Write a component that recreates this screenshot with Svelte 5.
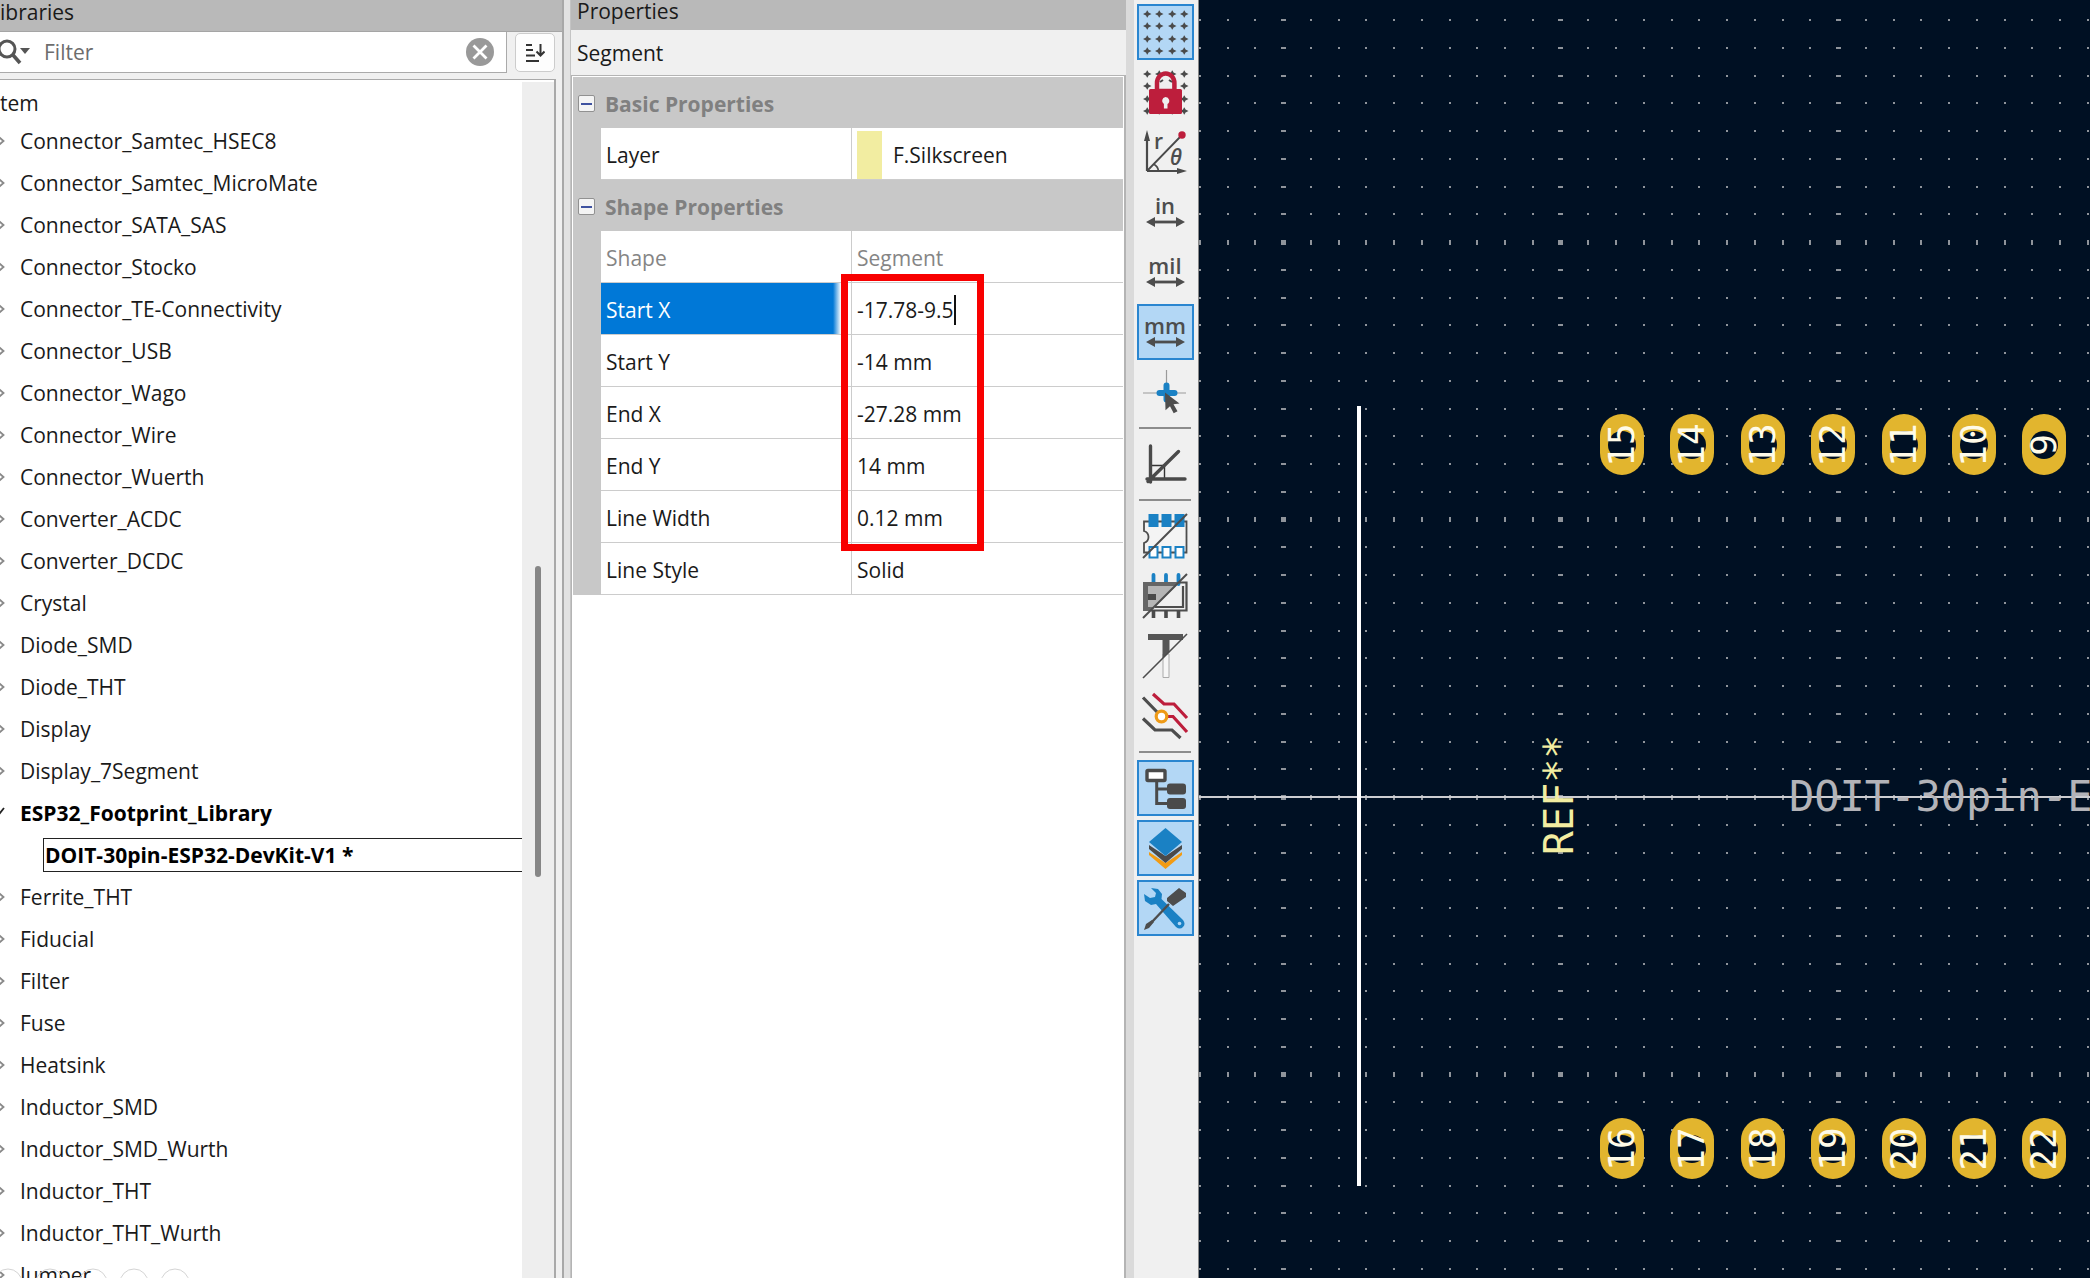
<script lang="ts">
  type Row = { label: string; value: string; kind?: 'swatch' | 'disabled' | 'editing' };

  const before = [
    'Connector_Samtec_HSEC8', 'Connector_Samtec_MicroMate', 'Connector_SATA_SAS', 'Connector_Stocko',
    'Connector_TE-Connectivity', 'Connector_USB', 'Connector_Wago', 'Connector_Wire', 'Connector_Wuerth',
    'Converter_ACDC', 'Converter_DCDC', 'Crystal', 'Diode_SMD', 'Diode_THT', 'Display', 'Display_7Segment',
  ];
  const after = [
    'Ferrite_THT', 'Fiducial', 'Filter', 'Fuse', 'Heatsink', 'Inductor_SMD', 'Inductor_SMD_Wurth',
    'Inductor_THT', 'Inductor_THT_Wurth', 'Jumper',
  ];

  const groups: { title: string; rows: Row[] }[] = [
    { title: 'Basic Properties', rows: [{ label: 'Layer', value: 'F.Silkscreen', kind: 'swatch' }] },
    {
      title: 'Shape Properties',
      rows: [
        { label: 'Shape', value: 'Segment', kind: 'disabled' },
        { label: 'Start X', value: '-17.78-9.5', kind: 'editing' },
        { label: 'Start Y', value: '-14 mm' },
        { label: 'End X', value: '-27.28 mm' },
        { label: 'End Y', value: '14 mm' },
        { label: 'Line Width', value: '0.12 mm' },
        { label: 'Line Style', value: 'Solid' },
      ],
    },
  ];

  // Tool ids by toolbar section; a separator is drawn between sections.
  const sections = [
    ['grid', 'lock', 'polar', 'in', 'mil', 'mm', 'cursor'],
    ['angle'],
    ['pads', 'graphics', 'text', 'tracks'],
    ['tree', 'layers', 'tools'],
  ];
  const names: Record<string, string> = {
    grid: 'Show grid', lock: 'Grid overrides', polar: 'Polar coordinates', in: 'Inches', mil: 'Mils',
    mm: 'Millimeters', cursor: 'Full-window crosshairs', angle: 'Constrain to 45 degrees',
    pads: 'Sketch pads', graphics: 'Sketch graphic items', text: 'Sketch text items',
    tracks: 'Inactive layer view mode', tree: 'Library tree', layers: 'Appearance manager', tools: 'Properties manager',
  };
  const active = ['grid', 'mm', 'tree', 'layers', 'tools'];
  const dots = [4, 16, 29, 41];

  // Board grid: every tenth line in each direction is drawn bolder.
  const pitch = 27.75;
  let small = '';
  for (let r = -29; r < 40; r++) {
    for (let c = -3; c < 80; c++) {
      const w = c % 10 === 0 ? 5 : 2;
      const h = r % 10 === 0 ? 5 : 2;
      const x = Math.round(84 + c * pitch - w / 2);
      const y = Math.round(797 + r * pitch - h / 2);
      small += `M${x} ${y}h${w}v${h}h-${w}z`;
    }
  }

  const padX = (i: number) => Math.round(423 + i * 70.4);
  const pads = [
    ...['15', '14', '13', '12', '11', '10', '9'].map((n, i) => ({ n, x: padX(i), y: 445 })),
    ...['16', '17', '18', '19', '20', '21', '22'].map((n, i) => ({ n, x: padX(i), y: 1149 })),
  ];
</script>

{#snippet chevron()}
  <svg class="chev" width="10" height="14" viewBox="0 0 10 14" aria-hidden="true">
    <path d="M2 1.5 8.5 7 2 12.5" fill="none" stroke="#8a8a8a" stroke-width="1.8" />
  </svg>
{/snippet}

{#snippet dimension(word: string)}
  <text x="22" y="24" text-anchor="middle" class="unit">{word}</text>
  <path d="M9 32h27" stroke="#4d4d4d" stroke-width="2.8" />
  <path d="M3 32l9-5v10zM42 32l-9-5v10z" fill="#4d4d4d" />
{/snippet}

{#snippet glyph(id: string)}
  <svg width="44" height="44" viewBox="0 0 44 44" overflow="visible" aria-hidden="true">
    {#if id === 'grid' || id === 'lock'}
      {#each dots as y}{#each dots as x}
        <path d="M{x - 4} {y}l3-1.5 1-2h0.5l1 2 3 1.5-3 1.5-1 2h-0.5l-1-2z" fill="#4a4a4a" />
      {/each}{/each}
    {/if}
    {#if id === 'lock'}
      <path d="M14 21V13a8.7 9.5 0 0 1 17.4 0v8z" fill="#efefef" stroke="#bd1e3c" stroke-width="4.5" />
      <path d="M17 12l3-2M26 10l3 2" stroke="#4a4a4a" stroke-width="2" />
      <rect x="6" y="19" width="33" height="25" rx="1.5" fill="#bd1e3c" />
      <path d="M22.5 27a3.8 3.8 0 0 1 2 7v4.5h-3.6v-4.5a3.8 3.8 0 0 1 1.6-7z" fill="#efefef" />
    {:else if id === 'polar'}
      <path d="M4 41V8M4 41h33" stroke="#4a4a4a" stroke-width="2.2" fill="none" />
      <path d="M4 0l3 11H1zM44 41l-10-3v6z" fill="#4a4a4a" />
      <path d="M4 41L38 6M10 34q5 2 5.5 7" stroke="#4a4a4a" stroke-width="1.8" fill="none" />
      <circle cx="39" cy="5" r="3.7" fill="#bd1e3c" />
      <text x="11" y="19" class="sym">r</text>
      <text x="27" y="35" class="sym it">θ</text>
    {:else if id === 'in' || id === 'mil' || id === 'mm'}
      {@render dimension(id)}
    {:else if id === 'cursor'}
      <path d="M23.5 0v23M0 23h43" stroke="#9a9a9a" stroke-width="1.2" />
      <path d="M23.5 15.5v14M16.5 23h15" stroke="#1a81c4" stroke-width="6" stroke-linecap="round" />
      <path d="M22 22.5l14.5 11-6 .8 4 7-3.8 2-3.7-7-4.5 4z" fill="#4d4d4d" />
    {:else if id === 'angle'}
      <path d="M7.5 23.5h14V37" fill="none" stroke="#333" stroke-width="1.4" />
      <path d="M7.5 4v36M4 37h38M5 39.5L35.5 9.5" fill="none" stroke="#4a4a4a" stroke-width="3.4" stroke-linecap="round" />
    {:else if id === 'pads'}
      <path d="M1 7.5h42.5v31H1V29q4.500-1.500 4.500-6T1 17z" fill="#f4f4f4" stroke="#4d4d4d" stroke-width="1.8" />
      <path d="M5.5 0h10v13h-10zM18.5 0h10v13h-10zM31.5 0h10v13h-10z" fill="#1a81c4" />
      <path d="M6.5 33h8v10.5h-8zM19.5 33h8v10.5h-8zM32.5 33h8v10.5h-8z" fill="#fff" stroke="#1a81c4" stroke-width="2" />
      <path d="M0 44L44 0" stroke="#4d4d4d" stroke-width="2" />
    {:else if id === 'graphics'}
      <path d="M10.5 10V1M23 10V1M35.5 10V1" stroke="#1a81c4" stroke-width="3.8" stroke-linecap="round" />
      <path d="M0 8h37L7 37H0z" fill="#666" />
      <path d="M5 12h28L12 33H5z" fill="#b5b5b5" />
      <path d="M5 20h8v6H5z" fill="#4a4a4a" />
      <path d="M36 8.5h7.5v28H8M40 12v21H12" fill="none" stroke="#4d4d4d" stroke-width="2.2" />
      <path d="M10.5 36v8M23 36v8M35.5 36v8" stroke="#4a4a4a" stroke-width="3.6" />
      <path d="M0 44L44 0" stroke="#4d4d4d" stroke-width="2" />
    {:else if id === 'text'}
      <path d="M20 20h6v23.5h-6z" fill="#f6f6f6" stroke="#aaa" stroke-width="1" />
      <path d="M5 0h35v6H26.5v12l-7 6V6H5z" fill="#565656" />
      <path d="M0 44L44 0" stroke="#4d4d4d" stroke-width="1.6" />
    {:else if id === 'tracks'}
      <path d="M0 3.5L16 20M0 24.5L12 36h17l8.5 8" fill="none" stroke="#4d4d4d" stroke-width="3.2" />
      <path d="M10 0l11 10h10l13 14M23 22.5h7L44 38" fill="none" stroke="#bd1e3c" stroke-width="3.2" />
      <circle cx="18.5" cy="22.5" r="5.3" fill="#fff" stroke="#ee9a16" stroke-width="3.2" />
    {:else if id === 'tree'}
      <path d="M13.7 15v22.5H27M13.7 23H27" fill="none" stroke="#4a4a4a" stroke-width="3" />
      <rect x="4" y="4.5" width="18" height="10" rx="1" fill="#fff" stroke="#4a4a4a" stroke-width="3.4" />
      <rect x="24" y="17.5" width="19" height="11" rx="3" fill="#4a4a4a" />
      <rect x="24" y="32" width="19" height="11" rx="3" fill="#4a4a4a" />
    {:else if id === 'layers'}
      <path d="M6 26l16.5 11L39 26v3L22.5 43 6 29z" fill="#f29b13" />
      <path d="M6 19l16.5 11L39 19v4L22.5 37 6 23z" fill="#4a4a4a" />
      <path d="M22.5 2L39 16 22.5 30 6 16z" fill="#1a81c4" />
    {:else if id === 'tools'}
      <path d="M8 2l7 1 4 5-.5 5L40 34q3 4 0 7t-7 0L13 18l-5 1-6-4-1-7 6 4 5-1 1-4z" fill="#1a81c4" />
      <circle cx="36.5" cy="37.5" r="1.8" fill="#b0d6f5" />
      <path d="M26 18L8 37" stroke="#4d4d4d" stroke-width="2.4" />
      <path d="M9 34l2 2-5 6-5 2 2-6zM36 2l7 5v4L30 20l-6-5v-3z" fill="#4d4d4d" />
    {/if}
  </svg>
{/snippet}

<div class="app">
  <aside class="libraries">
    <h2 class="caption">ibraries</h2>
    <div class="search">
      <label class="filter">
        <svg width="32" height="30" viewBox="0 0 32 30" aria-hidden="true">
          <circle cx="7" cy="12" r="8" fill="none" stroke="#555" stroke-width="3" />
          <path d="M13 18l7 8" stroke="#555" stroke-width="3.6" />
          <path d="M20 11h10l-5 6z" fill="#555" />
        </svg>
        <input type="text" placeholder="Filter" aria-label="Filter" />
        <button class="clear" aria-label="Clear filter">
          <svg width="28" height="28" viewBox="0 0 28 28" aria-hidden="true">
            <circle cx="14" cy="14" r="14" fill="#999" />
            <path d="M7.5 7.5l13 13M20.5 7.5l-13 13" stroke="#fff" stroke-width="2.8" />
          </svg>
        </button>
      </label>
      <button class="sort" aria-label="Sort">
        <svg width="20" height="20" viewBox="0 0 20 20" aria-hidden="true">
          <path d="M1 2h6M1 7h7M1 12.5h9M1 18h13" stroke="#333" stroke-width="2" />
          <path d="M15.5 1v11M11.5 8.5l4 4 4-4" fill="none" stroke="#333" stroke-width="2" />
        </svg>
      </button>
    </div>
    <div class="treebox">
      <div class="tree">
        <div class="head">tem</div>
        <ul>
          {#each before as name}<li>{@render chevron()}{name}</li>{/each}
          <li class="bold">
            <svg class="chev" width="10" height="14" viewBox="0 0 10 14" aria-hidden="true">
              <path d="M-3 8l4 4 8-10" fill="none" stroke="#222" stroke-width="1.8" />
            </svg>ESP32_Footprint_Library
          </li>
          <li class="bold child"><span>DOIT-30pin-ESP32-DevKit-V1 *</span></li>
          {#each after as name}<li>{@render chevron()}{name}</li>{/each}
        </ul>
      </div>
      <div class="track"><div class="thumb"></div></div>
    </div>
    <svg class="ghost" width="200" height="10" aria-hidden="true">
      {#each [8, 50, 93, 134, 175] as x}<circle cx={x} cy="15" r="14" />{/each}
    </svg>
  </aside>
  <div class="split"></div>

  <section class="properties">
    <h2 class="caption">Properties</h2>
    <div class="subject">Segment</div>
    <div class="gridbox">
      <div class="wrap">
        <table>
          <colgroup><col class="c1" /><col class="c2" /><col /></colgroup>
          <tbody>
            {#each groups as g}
              <tr class="group">
                <th class="gutter"><button class="fold" aria-label="Collapse {g.title}"></button></th>
                <th colspan="2">{g.title}</th>
              </tr>
              {#each g.rows as r}
                <tr class={r.kind}>
                  <td class="gutter"></td>
                  <td class="name">{r.label}</td>
                  <td class="value">
                    {#if r.kind === 'editing'}
                      <div class="edit"><input type="text" value={r.value} aria-label={r.label} /><i></i></div>
                    {:else if r.kind === 'swatch'}
                      <div class="layer"><i></i>{r.value}</div>
                    {:else}{r.value}{/if}
                  </td>
                </tr>
              {/each}
            {/each}
          </tbody>
        </table>
        <div class="mark"></div>
      </div>
    </div>
  </section>
  <div class="split wide"></div>

  <nav class="toolbar" aria-label="Display options">
    {#each sections as s, i}
      {#if i}<hr />{/if}
      {#each s as id}
        <button class:on={active.includes(id)} aria-label={names[id]}>{@render glyph(id)}</button>
      {/each}
    {/each}
  </nav>

  <main class="board">
    <svg width="100%" height="100%" role="img" aria-label="Footprint canvas">
      <path d={small} fill="#8f949b" />
      <rect x="0" y="796" width="100%" height="2" fill="#cdcdd1" />
      {#each pads as p}
        <rect x={p.x - 22} y={p.y - 31} width="44" height="61" rx="22" fill="#e2b52e" />
        <circle cx={p.x} cy={p.y} r="14" fill="#001023" />
        <text class="num" text-anchor="middle" transform="translate({p.x + 12} {p.y}) rotate(-90)">{p.n}</text>
      {/each}
      <text class="ref" transform="translate(374 855) rotate(-90)">REF**</text>
      <text class="val" x="590" y="811">DOIT-30pin-E</text>
      <rect x="158" y="406" width="4" height="780" fill="#fff" />
    </svg>
  </main>
</div>

<style>
  :global(body) { margin: 0; overflow: hidden; }
  * { box-sizing: border-box; }
  button { padding: 0; font: inherit; }
  input { font: inherit; color: inherit; border: 0; outline: 0; padding: 0; background: none; }
  .app {
    display: grid;
    grid-template-columns: 562px 9px 555px 8px 64px minmax(0, 1fr);
    height: 100vh;
    overflow: hidden;
    font: 21px/30px 'Open Sans', 'Noto Sans', sans-serif;
    color: #1a1a1a;
    background: #f0f0f0;
  }
  .app > * { min-height: 0; overflow: hidden; }
  .caption { margin: 0; font-size: 21px; font-weight: 400; background: #b9b9b9; }

  .libraries { display: flex; flex-direction: column; position: relative; }
  .libraries .caption { height: 32px; line-height: 25px; border-bottom: 1px solid #a5a5a5; flex: none; }
  .search { display: flex; gap: 8px; align-items: center; height: 41px; padding-right: 7px; flex: none; }
  .filter { flex: 1; height: 41px; display: flex; align-items: center; background: #fff; border: 1px solid #aaa; border-left: 0; border-top: 0; padding-right: 12px; }
  .filter input { flex: 1; min-width: 0; margin-left: 12px; }
  .filter input::placeholder { color: #6d6d6d; opacity: 1; }
  .clear { border: 0; background: none; height: 28px; }
  .clear svg { display: block; }
  .sort { width: 40px; height: 39px; background: #fdfdfd; border: 1px solid #ccc; border-radius: 5px; display: grid; place-items: center; }
  .treebox { flex: 1; min-height: 0; margin: 6px 6px 0 0; display: flex; background: #fff; border: 1px solid #a9a9a9; border-width: 1px 2px 0 0; }
  .tree { flex: 1; min-width: 0; overflow: hidden; padding-top: 8px; }
  .head { height: 32px; line-height: 30px; }
  ul { list-style: none; margin: 0; padding: 0; }
  li { height: 42px; display: flex; align-items: center; white-space: nowrap; }
  .chev { flex: none; margin: 0 15px 0 -5px; }
  .bold { font-weight: 700; color: #000; }
  .child span { flex: 1; margin-left: 43px; line-height: 32px; border: 1px solid #222; border-right: 0; padding-left: 1px; }
  .track { width: 32px; background: #eee; margin-top: 2px; }
  .thumb { width: 6px; height: 26%; margin: 484px auto 0 13px; border-radius: 3px; background: #868686; }
  .ghost { position: absolute; left: 0; bottom: 0; fill: none; stroke: #d4d4d4; }

  .split { background: #e2e2e2; border-left: 2px solid #a8a8a8; border-right: 1px solid #c4c4c4; }
  .wide { background: #dadada; border-left: 0; border-right: 0; }

  .properties { display: flex; flex-direction: column; }
  .properties .caption { height: 30px; line-height: 22px; padding-left: 6px; flex: none; }
  .subject { height: 45px; line-height: 46px; padding-left: 6px; flex: none; }
  .gridbox { flex: 1; background: #fff; border: 1px solid #b4b4b4; border-bottom: 0; border-right-width: 2px; padding: 1px; }
  .wrap { position: relative; }
  table { width: 100%; border-spacing: 0; table-layout: fixed; }
  .c1 { width: 28px; }
  .c2 { width: 250px; }
  td, th { height: 52px; padding: 2px 0 0 5px; text-align: left; font-weight: 400; }
  td { border-bottom: 1px solid #ccc; }
  .group th { height: 51px; background: #c8c8c8; color: #808080; font-weight: 700; padding-left: 4px; }
  .group .gutter { padding-left: 5px; }
  td.gutter { background: #c8c8c8; border-color: #c8c8c8; }
  .value { border-left: 1px solid #ccc; }
  .fold { display: block; width: 17px; height: 17px; border: 1px solid #919191; border-radius: 2px; background: linear-gradient(#3f52a0, #3f52a0) center / 11px 2px no-repeat, #f4f4f4; }
  .disabled { color: #858585; }
  .editing .name { color: #fff; background: linear-gradient(90deg, #0078d7 232px, #fff 240px); }
  .edit { display: flex; align-items: center; }
  .edit input { field-sizing: content; }
  .edit i { width: 2px; height: 30px; background: #111; }
  .layer { display: flex; align-items: center; gap: 11px; }
  .layer i { width: 25px; height: 48px; background: #f2eda1; }
  .mark { position: absolute; left: 268px; top: 197px; width: 143px; height: 277px; border: 7px solid #f80000; }

  .toolbar { display: flex; flex-direction: column; align-items: center; gap: 4px; padding: 4px 2px 0 0; }
  .toolbar button { flex: none; width: 57px; height: 56px; border: 1px solid transparent; background: none; display: grid; place-items: center; }
  .toolbar .on { background: #b3d7f5; border: 2px solid #2a86d0; }
  hr { width: 52px; height: 2px; margin: 3px 0; border: 0; background: #8c8c8c; flex: none; }
  .unit { font: 600 22px 'Open Sans', sans-serif; fill: #4d4d4d; }
  .sym { font: 600 21px 'Open Sans', sans-serif; fill: #4d4d4d; }
  .it { font-style: italic; }

  .board { background: #001023; border-left: 1px solid #888; }
  .board svg { display: block; }
  .num { font: 36px 'DejaVu Sans Mono', monospace; fill: #fffbe8; }
  .ref { font: 40px 'DejaVu Sans Mono', monospace; fill: #f2eda1; }
  .val { font: 42px 'DejaVu Sans Mono', monospace; fill: #b3b3b8; }
</style>
